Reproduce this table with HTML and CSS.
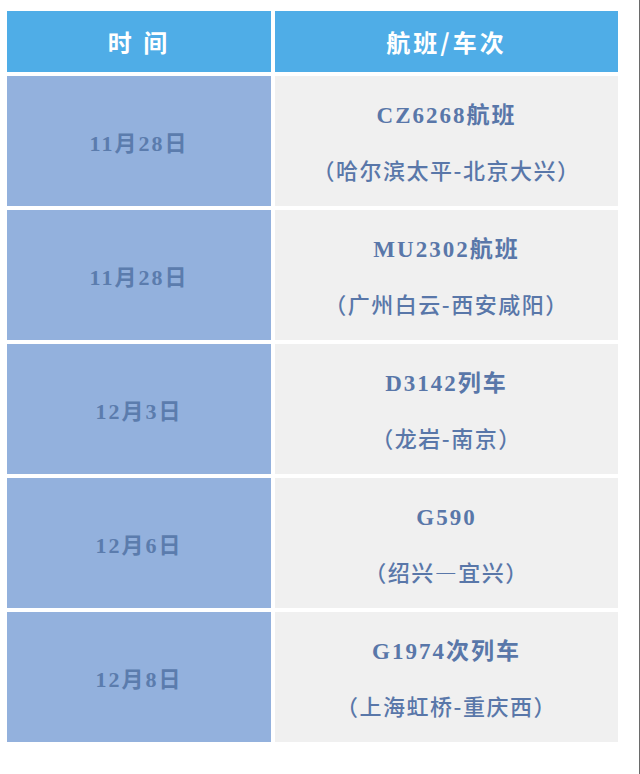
FILE: index.html
```html
<!DOCTYPE html>
<html lang="zh">
<head>
<meta charset="utf-8">
<link rel="stylesheet" href="styles.css">
</head>
<body>
<div class="table">
  <div class="head">时 间</div>
  <div class="head">航班/车次</div>

  <div class="date">11月28日</div>
  <div class="info"><div class="code">CZ6268航班</div><div class="route">（哈尔滨太平-北京大兴）</div></div>

  <div class="date">11月28日</div>
  <div class="info"><div class="code">MU2302航班</div><div class="route">（广州白云-西安咸阳）</div></div>

  <div class="date">12月3日</div>
  <div class="info"><div class="code">D3142列车</div><div class="route">（龙岩-南京）</div></div>

  <div class="date">12月6日</div>
  <div class="info"><div class="code">G590</div><div class="route">（绍兴—宜兴）</div></div>

  <div class="date">12月8日</div>
  <div class="info"><div class="code">G1974次列车</div><div class="route">（上海虹桥-重庆西）</div></div>
</div>
</body>
</html>
```

FILE: styles.css
```css
html {
  background: #ffffff;
  border-right: 1px solid #6a6a6a;
  min-height: 100%;
  box-sizing: border-box;
}
body {
  margin: 0;
  padding: 11px 0 0 7px;
  font-family: "Noto Sans CJK SC", sans-serif;
}
.table {
  display: grid;
  grid-template-columns: 264px 343px;
  grid-template-rows: 61px repeat(5, 130px);
  gap: 4px;
  width: 611px;
}
.head {
  background: #4fade7;
  color: #ffffff;
  font-family: "Noto Sans CJK SC", sans-serif;
  font-weight: 700;
  font-size: 24px;
  letter-spacing: 3px;
  display: flex;
  align-items: center;
  justify-content: center;
  white-space: pre;
}
.date {
  background: #93b1dd;
  color: #5b7cad;
  font-family: "Liberation Serif", "Noto Sans CJK SC", serif;
  font-weight: 700;
  font-size: 22px;
  letter-spacing: 2px;
  display: flex;
  align-items: center;
  justify-content: center;
}
.info {
  background: #f0f0f0;
  color: #5977a9;
  display: flex;
  flex-direction: column;
  align-items: center;
  justify-content: center;
}
.code {
  font-family: "Liberation Serif", "Noto Sans CJK SC", serif;
  font-weight: 700;
  font-size: 23px;
  letter-spacing: 2px;
  line-height: 56px;
}
.route {
  font-family: "Noto Sans CJK SC", sans-serif;
  font-weight: 500;
  font-size: 22px;
  letter-spacing: 1.5px;
  line-height: 50px;
}
```
